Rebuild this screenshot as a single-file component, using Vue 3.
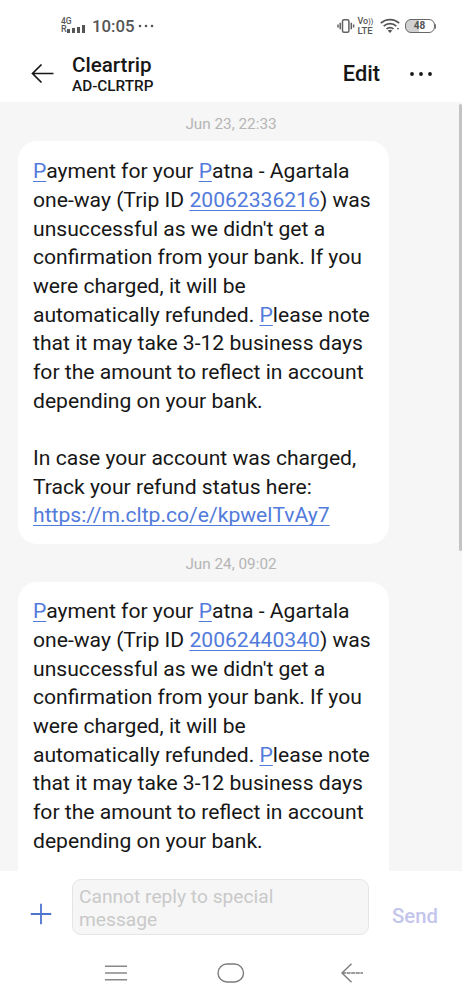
<script setup>
const messages = [
  { date: 'Jun 23, 22:33', trip: '20062336216', link: 'https://m.cltp.co/e/kpwelTvAy7' },
  { date: 'Jun 24, 09:02', trip: '20062440340', link: '' },
]
</script>

<template>
  <div class="phone">
    <header class="status">
      <div class="network"><span>4G</span>
        <div class="roaming"><span>R</span><i class="s1"></i><i class="s2"></i><i class="s3"></i><i class="s4"></i></div>
      </div>
      <span class="clock">10:05</span>
      <svg class="status-dots" width="16" height="4" viewBox="0 0 16 4" fill="#555"><circle cx="2" cy="2" r="1.3"/><circle cx="8" cy="2" r="1.3"/><circle cx="14" cy="2" r="1.3"/></svg>
      <div class="spacer"></div>
      <svg class="vibrate" width="18" height="16" viewBox="0 0 18 16" fill="none" stroke="#606060" stroke-width="1.5"><rect x="5.5" y="1.7" width="6.4" height="12.6" rx="1.6"/><path d="M3.2 4.7v6.6M14.3 4.7v6.6M1 6.5v3M16.6 6.5v3"/></svg>
      <div class="volte"><span class="vo">Vo<b>))</b></span><span>LTE</span></div>
      <svg class="wifi" width="20" height="16" viewBox="0 0 20 16" fill="none" stroke="#555" stroke-width="1.7"><path d="M.8 5.2C5.9.3 14.1.3 19.2 5.2M3.7 8.2c3.5-3.5 9.1-3.5 12.6 0M6.5 11c1.9-1.8 5.1-1.8 7 0"/><path d="M7.7 12.6q2.3-1.6 4.6 0L10 15z" fill="#555" stroke="none"/><circle cx="18" cy="10.6" r=".9" fill="#555" stroke="none"/></svg>
      <div class="battery"><span>48</span></div><i class="nub"></i>
    </header>

    <div class="title-bar">
      <svg class="back" width="24" height="22" viewBox="0 0 24 22" fill="none" stroke="#171717" stroke-width="1.7"><path d="M22.5 10.5H1.5M10.5 1.5 1.5 10.5l9 9"/></svg>
      <div class="contact"><h1>Cleartrip</h1><p>AD-CLRTRP</p></div>
      <span class="edit">Edit</span>
      <svg class="more" width="24" height="6" viewBox="0 0 24 6" fill="#171717"><circle cx="3" cy="3" r="1.9"/><circle cx="12" cy="3" r="1.9"/><circle cx="21" cy="3" r="1.9"/></svg>
    </div>

    <main class="thread">
      <section v-for="m in messages" :key="m.trip" class="entry">
        <time>{{ m.date }}</time>
        <div class="bubble">
          <a>P</a>ayment for your <a>P</a>atna - Agartala<br>
          one-way (Trip ID <a>{{ m.trip }}</a>) was<br>
          unsuccessful as we didn't get a<br>
          confirmation from your bank. If you<br>
          were charged, it will be<br>
          automatically refunded. <a>P</a>lease note<br>
          that it may take 3-12 business days<br>
          for the amount to reflect in account<br>
          depending on your bank.
          <template v-if="m.link"><br><br>In case your account was charged,<br>Track your refund status here:<br><a>{{ m.link }}</a></template>
        </div>
      </section>
      <div class="scrollbar"></div>
    </main>

    <div class="composer">
      <svg class="plus" width="22" height="22" viewBox="0 0 22 22" stroke="#4c74cf" stroke-width="1.8"><path d="M11 .8v20.4M.8 11h20.4"/></svg>
      <div class="field">Cannot reply to special<br>message</div>
      <span class="send">Send</span>
    </div>

    <nav class="nav">
      <svg width="24" height="20" viewBox="0 0 24 20" fill="none" stroke="#888" stroke-width="1.6"><path d="M1 3.3h22M1 10h22M1 16.7h22"/></svg>
      <svg width="28" height="20" viewBox="0 0 28 20" fill="none" stroke="#7c7c7c" stroke-width="1.4"><rect x="1" y="1" width="25.5" height="18" rx="9"/></svg>
      <svg width="24" height="20" viewBox="0 0 24 20" fill="none" stroke="#7c7c7c" stroke-width="1.4"><path d="M11.5.8 2 10l9.5 9.2"/><path d="M2 10h21" stroke-dasharray="4 .6"/></svg>
    </nav>
  </div>
</template>

<style>
body { background: #fff; }
</style>

<style scoped>
.phone { width: 462px; height: 1000px; display: flex; flex-direction: column; overflow: hidden; background: #fff; color: #171717; font-family: Roboto, sans-serif; }
.status { height: 45px; flex: none; display: flex; align-items: center; padding: 7px 26px 0 61px; box-sizing: border-box; color: #555; }
.network { width: 26px; font-size: 9px; line-height: 8px; font-weight: 500; height: 18px; }
.network > span { display: block; font-size: 8.5px; }
.roaming { display: flex; align-items: flex-end; gap: 2.7px; height: 9px; }
.roaming span { margin-right: -2px; line-height: 9px; }
.roaming i { width: 2.3px; background: #555; flex: none; margin-bottom: 1px; }
.s1 { height: 4px; } .s2 { height: 5.5px; } .s3 { height: 6.5px; } .s4 { height: 8px; }
.clock { font-size: 16.8px; font-weight: 500; margin-left: 5px; width: 42px; line-height: 20px; }
.status-dots { margin: -1px 0 0 4px; }
.spacer { flex: 1; }
.vibrate { margin-right: 3px; }
.volte { width: 18px; font-size: 9.5px; line-height: 9px; display: flex; flex-direction: column; font-weight: 500; }
.vo { font-size: 9px; white-space: nowrap; }
.volte b { font-size: 7px; font-weight: 500; vertical-align: 0.5px; }
.wifi { margin: 0 5px 0 4px; }
.battery { width: 30px; height: 14px; border: 1.5px solid #666; border-radius: 6px; box-sizing: border-box; background: linear-gradient(90deg, #d1d1d1 48%, #fff 48%); font-size: 10px; line-height: 11px; font-weight: 700; text-align: center; }
.nub { width: 1.5px; height: 5px; background: #777; border-radius: 0 2px 2px 0; }
.title-bar { height: 57px; flex: none; display: flex; align-items: center; padding: 0 29px 0 31px; }
.contact { margin-left: 17px; flex: 1; padding-top: 1px; }
h1 { font-size: 20.6px; line-height: 23px; font-weight: 500; margin: 0; }
.contact p { font-size: 15.3px; line-height: 18px; font-weight: 500; margin: 0; }
.edit { font-size: 21.8px; line-height: 24px; font-weight: 500; margin: 1px 29px 0 0; }
.thread { height: 769px; flex: none; position: relative; background: #f6f6f6; overflow: hidden; box-sizing: border-box; padding-left: 18px; }
.entry time { display: block; height: 38px; line-height: 38px; box-sizing: border-box; padding-top: 1px; font-size: 15.3px; color: #b5b5b5; width: 426px; text-align: center; }
.entry:first-child time { height: 39px; padding-top: 3px; }
.bubble { width: 371px; box-sizing: border-box; padding: 15.3px 0 15.3px 15px; background: #fff; border-radius: 19px; font-size: 21.12px; line-height: 28.65px; white-space: nowrap; }
.entry:first-child .bubble { padding: 16.3px 0 14.3px 15px; }
.entry:last-of-type .bubble { border-radius: 19px 19px 0 0; }
a { color: #527bdb; text-decoration: underline; text-decoration-thickness: 1px; text-underline-offset: 3px; text-decoration-skip-ink: none; }
.scrollbar { position: absolute; right: 0; top: 2px; width: 3px; height: 447px; background: #c4c4c4; border-radius: 2px; }
.composer { height: 74px; flex: none; display: flex; padding: 8px 24px 0 30px; box-sizing: border-box; align-items: flex-start; }
.plus { margin-top: 24px; }
.field { margin-left: 20px; width: 297px; height: 56px; box-sizing: border-box; border: 1px solid #e5e5e5; border-radius: 9px; background: #f6f6f6; padding: 6px; color: #c9c9c9; font-size: 19.2px; line-height: 22.5px; white-space: nowrap; }
.send { margin: 25px 0 0 23px; font-size: 20.3px; line-height: 24px; font-weight: 500; color: #c4c5ec; }
.nav { height: 55px; flex: none; display: flex; gap: 89px; align-items: center; padding: 1px 0 0 104px; box-sizing: border-box; }
.nav svg:last-child { margin-left: 6px; }
</style>
